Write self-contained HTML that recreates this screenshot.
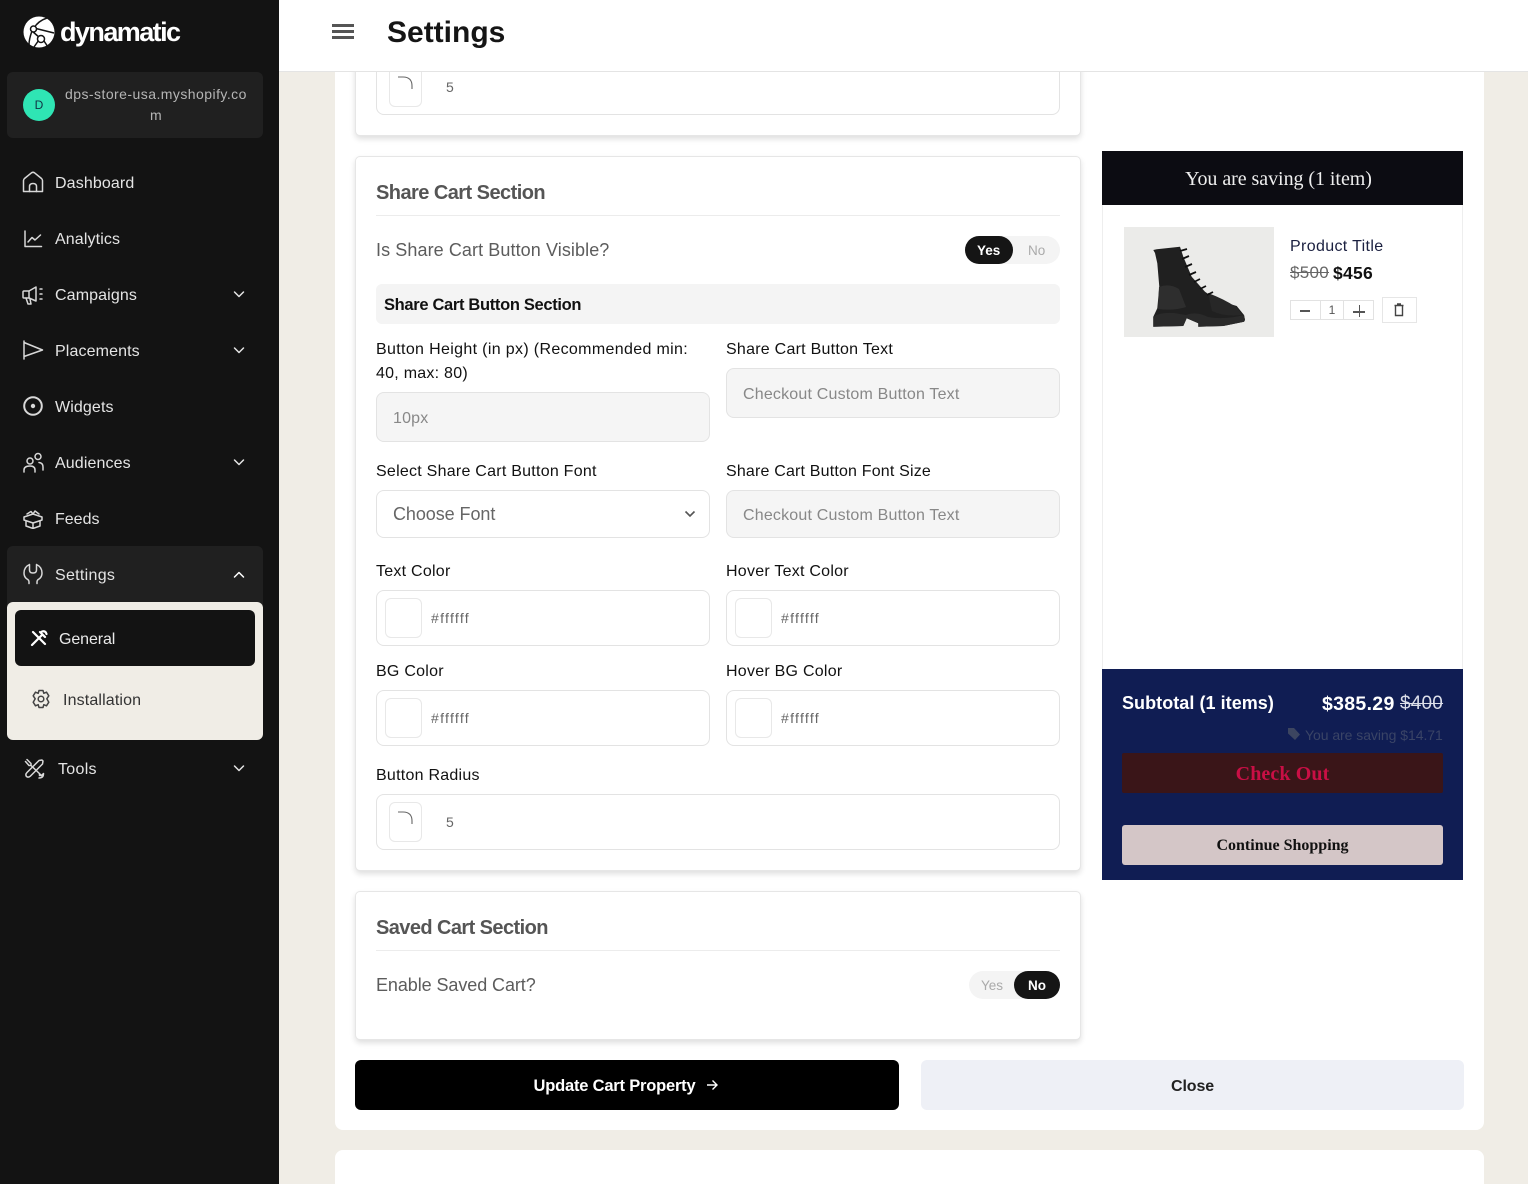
<!DOCTYPE html>
<html lang="en">
<head>
<meta charset="utf-8">
<title>Settings</title>
<style>
*{box-sizing:border-box;margin:0;padding:0}
html,body{width:1528px;height:1184px;overflow:hidden;background:#f0ede6;font-family:"Liberation Sans",sans-serif}
#w{position:relative;width:1528px;height:1184px;overflow:hidden;background:#f0ede6}
.a{position:absolute}
.t{position:absolute;white-space:nowrap;line-height:20px}
.nav{color:#e4e4e4;font-size:16px;letter-spacing:.12px}
.lab{color:#111;font-size:16px;letter-spacing:.25px;height:20px}
.box{position:absolute;background:#fff;border:1px solid #e3e3e3;border-radius:8px}
.dis{background:#f5f5f5}
.sw{position:absolute;width:37px;height:40px;border:1px solid #e8e8e8;border-radius:6px;background:#fff}
.hex{color:#666;font-size:14px;letter-spacing:1.3px}
.ph{color:#888;font-size:16px;letter-spacing:.19px}
.card{position:absolute;left:355px;width:726px;background:#fff;border:1px solid #e6e6e6;border-radius:5px;box-shadow:0 3px 6px rgba(0,0,0,.13)}
svg.i{position:absolute;fill:none;stroke:#d8d8d8;stroke-width:1.5;stroke-linecap:round;stroke-linejoin:round}
</style>
</head>
<body>
<div id="w">
<!-- main panels -->
<div class="a" style="left:335px;top:60px;width:1149px;height:1070px;background:#fff;border-radius:8px"></div>
<div class="a" style="left:335px;top:1150px;width:1149px;height:34px;background:#fff;border-radius:8px 8px 0 0"></div>

<!-- header -->
<div class="a" style="left:279px;top:0;width:1249px;height:72px;background:#fff;border-bottom:1px solid #e4e4e4;z-index:5"></div>
<div class="a" style="left:332px;top:24px;width:22px;height:3px;background:#555;z-index:6"></div>
<div class="a" style="left:332px;top:30px;width:22px;height:3px;background:#555;z-index:6"></div>
<div class="a" style="left:332px;top:36px;width:22px;height:3px;background:#555;z-index:6"></div>
<div class="t" style="left:387px;top:15px;line-height:36px;font-size:30px;font-weight:bold;color:#151515;letter-spacing:0;z-index:6">Settings</div>

<!-- first card remainder -->
<div class="card" style="top:40px;height:96px"></div>
<div class="box" style="left:376px;top:40px;width:684px;height:75px"></div>
<div class="sw" style="left:389px;top:60px;width:33px;height:47px;z-index:1"></div>
<svg class="a" style="left:396px;top:74px;z-index:6" width="20" height="20"><path d="M2 3H7Q16 3 16 12V15" fill="none" stroke="#666" stroke-width="1.1"/></svg>
<div class="t hex" style="left:446px;top:77px;font-size:14px">5</div>

<!-- share cart card -->
<div class="card" style="top:156px;height:715px"></div>
<div class="t" style="left:376px;top:182px;line-height:22px;font-size:20px;font-weight:bold;color:#555;letter-spacing:-.55px">Share Cart Section</div>
<div class="a" style="left:376px;top:215px;width:684px;height:1px;background:#ececec"></div>
<div class="t" style="left:376px;top:240px;font-size:18px;color:#5c5c5c;letter-spacing:.09px">Is Share Cart Button Visible?</div>
<div class="a" style="left:965px;top:236px;width:95px;height:28px;border-radius:14px;background:#f4f4f4"></div>
<div class="a" style="left:965px;top:236px;width:48px;height:28px;border-radius:14px;background:#151515"></div>
<div class="t" style="left:977px;top:241px;font-size:13.5px;font-weight:bold;color:#fff">Yes</div>
<div class="t" style="left:1028px;top:241px;font-size:13.5px;color:#aaa">No</div>
<div class="a" style="left:376px;top:284px;width:684px;height:40px;border-radius:6px;background:#f4f4f4"></div>
<div class="t" style="left:384px;top:295px;font-size:16.5px;font-weight:bold;color:#111;letter-spacing:-.33px">Share Cart Button Section</div>

<div class="t lab" style="left:376px;top:340px;letter-spacing:.34px">Button Height (in px) (Recommended min:</div>
<div class="t lab" style="left:376px;top:364px">40, max: 80)</div>
<div class="box dis" style="left:376px;top:392px;width:334px;height:50px"></div>
<div class="t ph" style="left:393px;top:409px">10px</div>

<div class="t lab" style="left:726px;top:340px">Share Cart Button Text</div>
<div class="box dis" style="left:726px;top:368px;width:334px;height:50px"></div>
<div class="t ph" style="left:743px;top:385px">Checkout Custom Button Text</div>

<div class="t lab" style="left:376px;top:462px;letter-spacing:.25px">Select Share Cart Button Font</div>
<div class="box" style="left:376px;top:490px;width:334px;height:48px"></div>
<div class="t" style="left:393px;top:504px;font-size:18px;color:#666;letter-spacing:-.07px">Choose Font</div>
<svg class="a" style="left:684px;top:509px" width="12" height="10"><path d="M1.5 2.500L6 7L10.500 2.500" fill="none" stroke="#555" stroke-width="1.6"/></svg>

<div class="t lab" style="left:726px;top:462px;letter-spacing:.18px">Share Cart Button Font Size</div>
<div class="box dis" style="left:726px;top:490px;width:334px;height:48px"></div>
<div class="t ph" style="left:743px;top:506px">Checkout Custom Button Text</div>

<div class="t lab" style="left:376px;top:562px">Text Color</div>
<div class="box" style="left:376px;top:590px;width:334px;height:56px"></div>
<div class="sw" style="left:385px;top:598px"></div>
<div class="t hex" style="left:431px;top:608px">#ffffff</div>

<div class="t lab" style="left:726px;top:562px">Hover Text Color</div>
<div class="box" style="left:726px;top:590px;width:334px;height:56px"></div>
<div class="sw" style="left:735px;top:598px"></div>
<div class="t hex" style="left:781px;top:608px">#ffffff</div>

<div class="t lab" style="left:376px;top:662px">BG Color</div>
<div class="box" style="left:376px;top:690px;width:334px;height:56px"></div>
<div class="sw" style="left:385px;top:698px"></div>
<div class="t hex" style="left:431px;top:708px">#ffffff</div>

<div class="t lab" style="left:726px;top:662px">Hover BG Color</div>
<div class="box" style="left:726px;top:690px;width:334px;height:56px"></div>
<div class="sw" style="left:735px;top:698px"></div>
<div class="t hex" style="left:781px;top:708px">#ffffff</div>

<div class="t lab" style="left:376px;top:766px">Button Radius</div>
<div class="box" style="left:376px;top:794px;width:684px;height:56px"></div>
<div class="sw" style="left:389px;top:802px;width:33px"></div>
<svg class="a" style="left:396px;top:809px" width="20" height="20"><path d="M2 3H7Q16 3 16 12V15" fill="none" stroke="#666" stroke-width="1.1"/></svg>
<div class="t hex" style="left:446px;top:812px;font-size:14px">5</div>

<!-- saved cart card -->
<div class="card" style="top:891px;height:149px"></div>
<div class="t" style="left:376px;top:917px;line-height:22px;font-size:20px;font-weight:bold;color:#555;letter-spacing:-.58px">Saved Cart Section</div>
<div class="a" style="left:376px;top:950px;width:684px;height:1px;background:#ececec"></div>
<div class="t" style="left:376px;top:975px;font-size:18px;color:#5c5c5c;letter-spacing:-.08px">Enable Saved Cart?</div>
<div class="a" style="left:969px;top:971px;width:91px;height:28px;border-radius:14px;background:#f4f4f4"></div>
<div class="a" style="left:1014px;top:971px;width:46px;height:28px;border-radius:14px;background:#151515"></div>
<div class="t" style="left:981px;top:976px;font-size:13.5px;color:#aaa">Yes</div>
<div class="t" style="left:1028px;top:976px;font-size:13.5px;font-weight:bold;color:#fff">No</div>

<!-- actions -->
<div class="a" style="left:355px;top:1060px;width:543.500px;height:50px;background:#000;border-radius:6px"></div>
<div class="t" style="left:533.500px;top:1076px;font-size:16.500px;font-weight:bold;color:#fff;letter-spacing:-.2px">Update Cart Property</div>
<svg class="a" style="left:704px;top:1077px" width="16" height="16"><path d="M3 8H13M8.500 3.500L13 8L8.500 12.500" fill="none" stroke="#fff" stroke-width="1.4"/></svg>
<div class="a" style="left:921px;top:1060px;width:543px;height:50px;background:#eef0f6;border-radius:6px"></div>
<div class="t" style="left:1171px;top:1077px;font-size:16px;font-weight:bold;color:#222;letter-spacing:-.1px">Close</div>

<!-- preview -->
<div class="a" style="left:1102px;top:151px;width:361px;height:729px;background:#fff;border-left:1px solid #eee;border-right:1px solid #eee"></div>
<div class="a" style="left:1102px;top:151px;width:361px;height:54px;background:#0c0c12"></div>
<div class="t" style="left:1102px;top:169px;width:353px;text-align:center;font-family:'Liberation Serif',serif;font-size:20px;color:#eee;letter-spacing:-.05px">You are saving (1 item)</div>
<div class="a" style="left:1124px;top:227px;width:150px;height:110px;background:#ebebe9"></div>
<svg class="a" style="left:1124px;top:227px" width="150" height="110">
<path d="M29.300 23L32.700 22.300L56 19.700L59.300 29.700L67.700 49.700L81 64.700L92.700 73L112.700 79L120 88L121 93L120 94.700L99.300 99L74.300 99.700L74.300 96.300L62.700 91.300L59.300 99L29.300 99.700L29.300 89.700L33.300 81.300L35.300 59.700L33.300 36.300L31 26Z" fill="#202020"/>
<path d="M29.300 89.700Q36 85 50 86L62 88Q72 84 84 90Q100 93 120 88L121 93L120 94.700L99.300 99L74.300 99.700L74.300 96.300L62.700 91.300L59.300 99L29.300 99.700Z" fill="#2a2a2a"/>
<path d="M35 60Q45 56 55 62L62 80Q50 84 34 82Z" fill="#2e2e2e"/>
<path d="M84 66Q100 72 112 80Q116 84 118 88Q100 90 88 84Z" fill="#272727"/>
<path d="M56 24L63 22M58 32L65 29M61 40L68 37M65 48L72 45M70 55L76 52M76 62L82 59M83 68L89 65" stroke="#101010" stroke-width="1.800" fill="none"/>
</svg>
<div class="t" style="left:1290px;top:237px;font-size:16px;color:#1b2040;letter-spacing:.35px">Product Title</div>
<div class="t" style="left:1290px;top:263px;font-size:17px;color:#666;letter-spacing:.3px;text-decoration:line-through">$500</div>
<div class="t" style="left:1333px;top:263px;font-size:17.500px;font-weight:bold;color:#111;letter-spacing:.25px">$456</div>
<div class="a" style="left:1290px;top:300px;width:84px;height:20px;border:1px solid #e2e2e2"></div>
<div class="a" style="left:1320px;top:300px;width:24px;height:20px;border-left:1px solid #e2e2e2;border-right:1px solid #e2e2e2"></div>
<div class="a" style="left:1300px;top:310px;width:10px;height:2px;background:#555"></div>
<div class="t" style="left:1320px;top:300px;width:24px;text-align:center;font-size:12px;color:#555">1</div>
<div class="a" style="left:1353px;top:311px;width:12px;height:1.500px;background:#555"></div>
<div class="a" style="left:1358.500px;top:305px;width:1.500px;height:12px;background:#555"></div>
<div class="a" style="left:1382px;top:297px;width:35px;height:26px;border:1px solid #e6e6e6"></div>
<svg class="a" style="left:1392px;top:303px" width="14" height="14"><path d="M2.500 2.500H11.500M5 1H9M3.500 2.500V12.500H10.500V2.500" fill="none" stroke="#444" stroke-width="1.400"/></svg>

<div class="a" style="left:1102px;top:669px;width:361px;height:211px;background:#101d53"></div>
<div class="t" style="left:1122px;top:693px;font-size:18px;font-weight:bold;color:#fff;letter-spacing:.05px">Subtotal (1 items)</div>
<div class="t" style="left:1322px;top:694px;font-size:19.500px;font-weight:bold;color:#fff;letter-spacing:.3px">$385.29</div>
<div class="t" style="left:1400px;top:694px;font-size:19px;color:#dcdfea;letter-spacing:.2px;text-decoration:line-through">$400</div>
<svg class="a" style="left:1287px;top:727px" width="14" height="14"><path d="M1 1H7L13 7.500L8 13L1 6.500Z" fill="#3c4560"/></svg>
<div class="t" style="left:1305px;top:725px;font-size:14px;color:#3a4466;letter-spacing:-.05px">You are saving $14.71</div>
<div class="a" style="left:1122px;top:753px;width:321px;height:40px;background:#3a1518;border-radius:2px"></div>
<div class="t" style="left:1122px;top:764px;width:321px;text-align:center;font-family:'Liberation Serif',serif;font-size:20px;font-weight:bold;color:#c90f45;letter-spacing:.1px">Check Out</div>
<div class="a" style="left:1122px;top:825px;width:321px;height:40px;background:#d4c6c7;border-radius:3px"></div>
<div class="t" style="left:1122px;top:836px;width:321px;text-align:center;font-family:'Liberation Serif',serif;font-size:16px;font-weight:bold;color:#111">Continue Shopping</div>

<!-- sidebar -->
<div class="a" style="left:0;top:0;width:279px;height:1184px;background:#131313;z-index:7">
  <svg class="a" style="left:23px;top:16px" width="32" height="32" viewBox="0 0 32 32">
    <circle cx="16" cy="16" r="15.500" fill="#fff"/>
    <path d="M11 12L31 17M11 12Q15 5 24 2M9 15Q6 23 6 29M17 22L9 15M18 21L11 31M19 22L25 31" stroke="#131313" stroke-width="1.500" fill="none"/>
    <circle cx="10.500" cy="13" r="3" fill="#fff" stroke="#131313" stroke-width="1.500"/>
    <circle cx="18" cy="23" r="3.500" fill="#fff" stroke="#131313" stroke-width="1.500"/>
  </svg>
  <div class="t" style="left:60px;top:14px;line-height:36px;font-size:27px;font-weight:bold;color:#fff;letter-spacing:-1.560px">dynamatic</div>

  <div class="a" style="left:7px;top:72px;width:256px;height:66px;background:#202020;border-radius:6px"></div>
  <div class="a" style="left:23px;top:89px;width:32px;height:32px;border-radius:50%;background:#2fe5b4"></div>
  <div class="t" style="left:23px;top:95px;width:32px;text-align:center;font-size:12px;color:#134;">D</div>
  <div class="t" style="left:65px;top:84px;font-size:14px;color:#b5b5b5;letter-spacing:.45px">dps-store-usa.myshopify.co</div>
  <div class="t" style="left:150px;top:105px;font-size:14px;color:#b5b5b5">m</div>

  <svg class="i" style="left:22px;top:171px" width="22" height="22"><path d="M1.500 20.500V9.500Q1.500 8.500 2.500 7.500L9.500 1.800Q11 .8 12.500 1.800L19.500 7.500Q20.500 8.500 20.500 9.500V20.500Z"/><path d="M7.500 20.500V15.500Q7.500 12.500 11 12.500Q14.500 12.500 14.500 15.500V20.500"/></svg>
  <div class="t nav" style="left:55px;top:174px">Dashboard</div>

  <svg class="i" style="left:23px;top:229px" width="20" height="20"><path d="M2 2V17.500H18.500"/><path d="M5 13L9 8.500L12 11L17.500 6"/></svg>
  <div class="t nav" style="left:55px;top:230px">Analytics</div>

  <svg class="i" style="left:22px;top:284px" width="22" height="22"><path d="M2 7H7L14 3V17L7 14H2Q1 14 1 13V8Q1 7 2 7Z"/><path d="M4 14L6 20H9L8 15M7 7V14"/><path d="M18 5H20M18 10H20M18 15H20"/></svg>
  <div class="t nav" style="left:55px;top:286px">Campaigns</div>
  <svg class="i" style="left:232px;top:289px;stroke:#e4e4e4" width="14" height="12"><path d="M2.500 3L7 7.500L11.500 3"/></svg>

  <svg class="i" style="left:23px;top:340px" width="21" height="20"><path d="M1 1V19M1 2.500L19.500 10L1 16.500"/></svg>
  <div class="t nav" style="left:55px;top:342px">Placements</div>
  <svg class="i" style="left:232px;top:345px;stroke:#e4e4e4" width="14" height="12"><path d="M2.500 3L7 7.500L11.500 3"/></svg>

  <svg class="i" style="left:23px;top:396px;stroke-width:2" width="20" height="20"><circle cx="10" cy="10" r="8.800"/><circle cx="10" cy="10" r="2.200" fill="#d8d8d8" stroke="none"/></svg>
  <div class="t nav" style="left:55px;top:398px">Widgets</div>

  <svg class="i" style="left:23px;top:452px" width="21" height="21"><circle cx="7" cy="9" r="3"/><circle cx="15" cy="4.500" r="3"/><path d="M1 20V18Q1 14 7 14Q12 14 12 18V20M16 10.500Q20 11 20 15V18"/></svg>
  <div class="t nav" style="left:55px;top:454px">Audiences</div>
  <svg class="i" style="left:232px;top:457px;stroke:#e4e4e4" width="14" height="12"><path d="M2.500 3L7 7.500L11.500 3"/></svg>

  <svg class="i" style="left:23px;top:508px" width="20" height="21"><path d="M1 9L10 6L19 9V12L10 15L1 12Z"/><path d="M3 13V18L10 20.500L17 18V13M10 15V20.500M4 6L8 3.500L10 6L12 3L16 6"/></svg>
  <div class="t nav" style="left:55px;top:510px;letter-spacing:0">Feeds</div>

  <div class="a" style="left:7px;top:546px;width:256px;height:60px;background:#202020;border-radius:6px 6px 0 0"></div>
  <svg class="i" style="left:23px;top:563px" width="20" height="22"><path d="M6.500 1.500Q1 4 1 10Q1 14 4 16Q6 17 6 19V20.500M13.500 1.500Q19 4 19 10Q19 14 16 16Q14 17 14 19V20.500M6.500 1.500V7Q6.500 10 10 10Q13.500 10 13.500 7V1.500"/></svg>
  <div class="t nav" style="left:55px;top:566px;letter-spacing:.3px">Settings</div>
  <svg class="i" style="left:232px;top:569px;stroke:#fff" width="14" height="12"><path d="M2.500 8L7 3.500L11.500 8"/></svg>

  <div class="a" style="left:7px;top:602px;width:256px;height:138px;background:#f0ede6;border-radius:6px"></div>
  <div class="a" style="left:15px;top:610px;width:240px;height:56px;background:#131313;border-radius:6px"></div>
  <svg class="i" style="left:30px;top:629px;stroke:#fff;stroke-width:2.200" width="18" height="18"><path d="M2 16L12 6M12 2.500Q15.500 1.500 16.500 5M10 3L15 8M3 3L15 15"/></svg>
  <div class="t" style="left:59px;top:630px;font-size:16px;color:#eaeaea;letter-spacing:-.1px">General</div>
  <svg class="i" style="left:31px;top:689px;stroke:#444" width="20" height="20"><path d="M8 1.500H12L12.800 4.300L15.500 3.200L17.800 6.800L15.800 9.800L17.800 13.200L15.500 16.800L12.800 15.700L12 18.500H8L7.200 15.700L4.500 16.800L2.200 13.200L4.200 9.800L2.200 6.800L4.500 3.200L7.200 4.300Z"/><circle cx="10" cy="10" r="2.800"/></svg>
  <div class="t" style="left:63px;top:691px;font-size:16px;color:#333;letter-spacing:.14px">Installation</div>

  <svg class="i" style="left:24px;top:758px" width="21" height="21"><path d="M3 1.500L7 5.500V7.500H5L1.500 3.500M7 7.500L18 18M15 20Q19.500 20 19.500 15.500L17.500 17.500H15.500V15.500M18 2L15 2.500L3 14.500Q1 16.500 2.500 18.500Q4.500 20 6.500 18L18.500 6L19 3Z"/></svg>
  <div class="t nav" style="left:58px;top:760px;letter-spacing:.3px">Tools</div>
  <svg class="i" style="left:232px;top:763px;stroke:#e4e4e4" width="14" height="12"><path d="M2.500 3L7 7.500L11.500 3"/></svg>
</div>
</div>
</body>
</html>
